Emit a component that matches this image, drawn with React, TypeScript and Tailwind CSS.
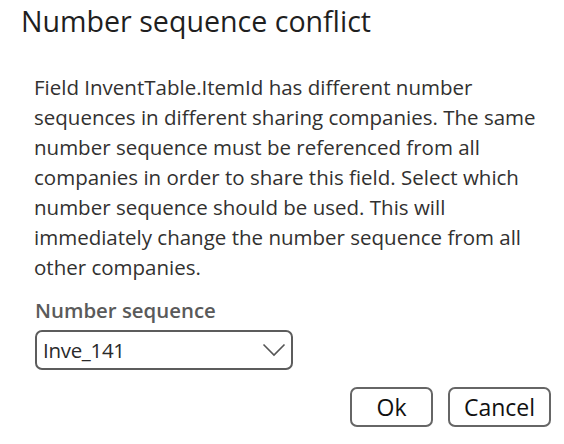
import React from "react";

const lines = [
  "Field InventTable.ItemId has different number",
  "sequences in different sharing companies. The same",
  "number sequence must be referenced from all",
  "companies in order to share this field. Select which",
  "number sequence should be used. This will",
  "immediately change the number sequence from all",
  "other companies.",
];

export default function App() {
  return (
    <div
      className="w-[564px] h-[444px] bg-white overflow-hidden"
      style={{ fontFamily: '"Open Sans", "Noto Sans", sans-serif' }}
    >
      <h1 className="pl-[21px] pt-[1px] text-[28.6px] leading-[40px] text-[#1f1f1f]">
        Number sequence conflict
      </h1>
      <div className="pl-[34px] mt-[31px] text-[20.5px] leading-[30px] text-[#323130]">
        {lines.map((l) => (
          <div key={l} className="whitespace-nowrap">{l}</div>
        ))}
      </div>
      <div className="pl-[35px] mt-[15px]">
        <div className="text-[20.4px] leading-[26px] font-semibold text-[#5a5a5a]">
          Number sequence
        </div>
        <div className="mt-[7px] w-[258px] h-[40px] border-2 border-[#5c5c5c] rounded-[7px] flex items-center justify-between pl-[6px] pr-[5px]">
          <span className="text-[20.5px] text-[#2a2a2a] tracking-[-0.3px]">Inve_141</span>
          <svg width="24" height="14" viewBox="0 0 24 14" fill="none">
            <path d="M1.5 1.5 L12 12 L22.5 1.5" stroke="#555" strokeWidth="1.6" />
          </svg>
        </div>
      </div>
      <div className="flex justify-end gap-[15px] pr-[13px] mt-[17px]">
        <button className="w-[83px] h-[40px] border-2 border-[#666] rounded-[7px] text-[23px] text-[#111] flex items-center justify-center">
          Ok
        </button>
        <button className="w-[103px] h-[40px] border-2 border-[#666] rounded-[7px] text-[23px] text-[#111] flex items-center justify-center">
          Cancel
        </button>
      </div>
    </div>
  );
}
